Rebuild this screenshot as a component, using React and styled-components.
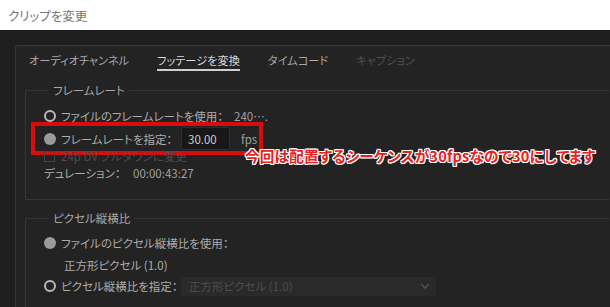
import styled, { createGlobalStyle } from "styled-components";

const Global = createGlobalStyle`
  html, body {
    margin: 0;
    padding: 0;
    background: #1f1f1f;
    overflow: hidden;
  }
  body {
    font-family: "Noto Sans CJK JP", "Noto Sans", sans-serif;
    font-feature-settings: "palt";
  }
`;

const Page = styled.div`
  width: 610px;
  height: 307px;
  display: flex;
  flex-direction: column;
  overflow: hidden;
`;

const TitleBar = styled.div`
  height: 30px;
  flex: none;
  background: #ffffff;
  display: flex;
  align-items: center;
  padding-left: 8px;
  color: #767676;
  font-size: 12.5px;
`;

const Body = styled.div`
  flex: 1;
  background: #1e1e1e;
  padding: 15px 0 0 15px;
  display: flex;
`;

const Panel = styled.div`
  flex: 1;
  background: #232323;
  border-top: 1px solid #363636;
  border-left: 1px solid #363636;
  border-top-left-radius: 3px;
  padding-left: 9px;
`;

const Tabs = styled.div`
  display: flex;
  gap: 28px;
  padding-left: 4px;
  height: 25px;
`;

const Tab = styled.div`
  font-size: 11.2px;
  line-height: 18px;
  padding-top: 5px;
  color: ${(p) => (p.$disabled ? "#505050" : p.$active ? "#d6d6d6" : "#a8a8a8")};
  border-bottom: 2px solid ${(p) => (p.$active ? "#cfcfcf" : "transparent")};
  height: 18px;
`;

const Group = styled.fieldset`
  margin: ${(p) => p.$top}px 0 0 0;
  padding: 0 0 ${(p) => p.$bottom}px 18px;
  border: 1px solid #363636;
  border-right: none;
  border-radius: 2px;
  min-width: 0;
`;

const Legend = styled.legend`
  margin-left: 5px;
  padding: 0 4px;
  font-size: 11.5px;
  line-height: 16px;
  color: #a8a8a8;
`;

const Rows = styled.div`
  display: flex;
  flex-direction: column;
  padding-top: ${(p) => p.$pad}px;
`;

const Row = styled.div`
  position: relative;
  display: flex;
  align-items: center;
  height: ${(p) => p.$h}px;
  margin-top: ${(p) => p.$mt || 0}px;
  font-size: 11.5px;
  color: ${(p) => (p.$dim ? "#4c4c4c" : "#acacac")};
`;

const Radio = styled.span`
  width: 12px;
  height: 12px;
  box-sizing: border-box;
  border-radius: 50%;
  flex: none;
  margin-right: 5px;
  border: ${(p) => (p.$on ? "none" : "2px solid #b9b9b9")};
  background: ${(p) => (p.$on ? "#9a9a9a" : "transparent")};
`;

const Check = styled.span`
  width: 11px;
  height: 11px;
  box-sizing: border-box;
  border: 1px solid #444;
  flex: none;
  margin-right: 6px;
`;

const Label = styled.span`
  width: ${(p) => (p.$w ? p.$w + "px" : "auto")};
  flex: none;
  white-space: nowrap;
`;

const Value = styled.span`
  margin-left: ${(p) => p.$ml || 0}px;
  color: #a0a0a0;
  white-space: nowrap;
`;

const Sub = styled.span`
  padding-left: 20px;
`;

const NumInput = styled.div`
  width: 49px;
  height: 23px;
  box-sizing: border-box;
  background: #171717;
  border: 1px solid #2e2e2e;
  border-radius: 2px;
  color: #d0d0d0;
  font-size: 11.5px;
  display: flex;
  align-items: center;
  padding-left: 6px;
`;

const Unit = styled.span`
  margin-left: 11px;
  color: #a0a0a0;
`;

const Select = styled.div`
  width: 255px;
  height: 19px;
  box-sizing: border-box;
  background: #2a2a2a;
  display: flex;
  align-items: center;
  justify-content: space-between;
  padding: 0 6px 0 8px;
  color: #4e4e4e;
  font-size: 11.5px;
`;

const Highlight = styled.div`
  position: absolute;
  left: -13px;
  top: -5px;
  width: 232px;
  height: 33px;
  box-sizing: border-box;
  border: 4px solid #d80c0c;
  pointer-events: none;
`;

const Note = styled.div`
  position: absolute;
  left: 201px;
  top: 20px;
  white-space: nowrap;
  font-size: 14.6px;
  font-weight: 700;
  line-height: 18px;
  letter-spacing: 0.2px;
  color: #e8211c;
  text-shadow: 1px 0 0 #fff, -1px 0 0 #fff, 0 1px 0 #fff, 0 -1px 0 #fff,
    1px 1px 0 #fff, -1px -1px 0 #fff, 1px -1px 0 #fff, -1px 1px 0 #fff;
  z-index: 2;
`;

const Chevron = () => (
  <svg width="10" height="6" viewBox="0 0 10 6">
    <path d="M1 1l4 4 4-4" fill="none" stroke="#555" strokeWidth="1.3" />
  </svg>
);

export default function App() {
  return (
    <Page>
      <Global />
      <TitleBar>クリップを変更</TitleBar>
      <Body>
        <Panel>
          <Tabs>
            <Tab>オーディオチャンネル</Tab>
            <Tab $active>フッテージを変換</Tab>
            <Tab>タイムコード</Tab>
            <Tab $disabled>キャプション</Tab>
          </Tabs>

          <Group $top={11} $bottom={16}>
            <Legend>フレームレート</Legend>
            <Rows $pad={7}>
              <Row $h={22}>
                <Radio />
                <Label>ファイルのフレームレートを使用：</Label>
                <Value $ml={11}>240….</Value>
              </Row>
              <Row $h={23}>
                <Radio $on />
                <Label $w={120}>フレームレートを指定：</Label>
                <NumInput>30.00</NumInput>
                <Unit>fps</Unit>
                <Highlight />
                <Note>今回は配置するシーケンスが30fpsなので30にしてます</Note>
              </Row>
              <Row $h={12} $dim>
                <Check />
                <Label>24p DV プルダウンに変更</Label>
              </Row>
              <Row $h={20} $mt={1}>
                <Label $w={89}>デュレーション：</Label>
                <Value>00:00:43:27</Value>
              </Row>
            </Rows>
          </Group>

          <Group $top={10} $bottom={20}>
            <Legend>ピクセル縦横比</Legend>
            <Rows $pad={6}>
              <Row $h={22}>
                <Radio $on />
                <Label>ファイルのピクセル縦横比を使用：</Label>
              </Row>
              <Row $h={22}>
                <Sub>正方形ピクセル (1.0)</Sub>
              </Row>
              <Row $h={20}>
                <Radio />
                <Label $w={120}>ピクセル縦横比を指定：</Label>
                <Select>
                  正方形ピクセル (1.0)
                  <Chevron />
                </Select>
              </Row>
            </Rows>
          </Group>
        </Panel>
      </Body>
    </Page>
  );
}
